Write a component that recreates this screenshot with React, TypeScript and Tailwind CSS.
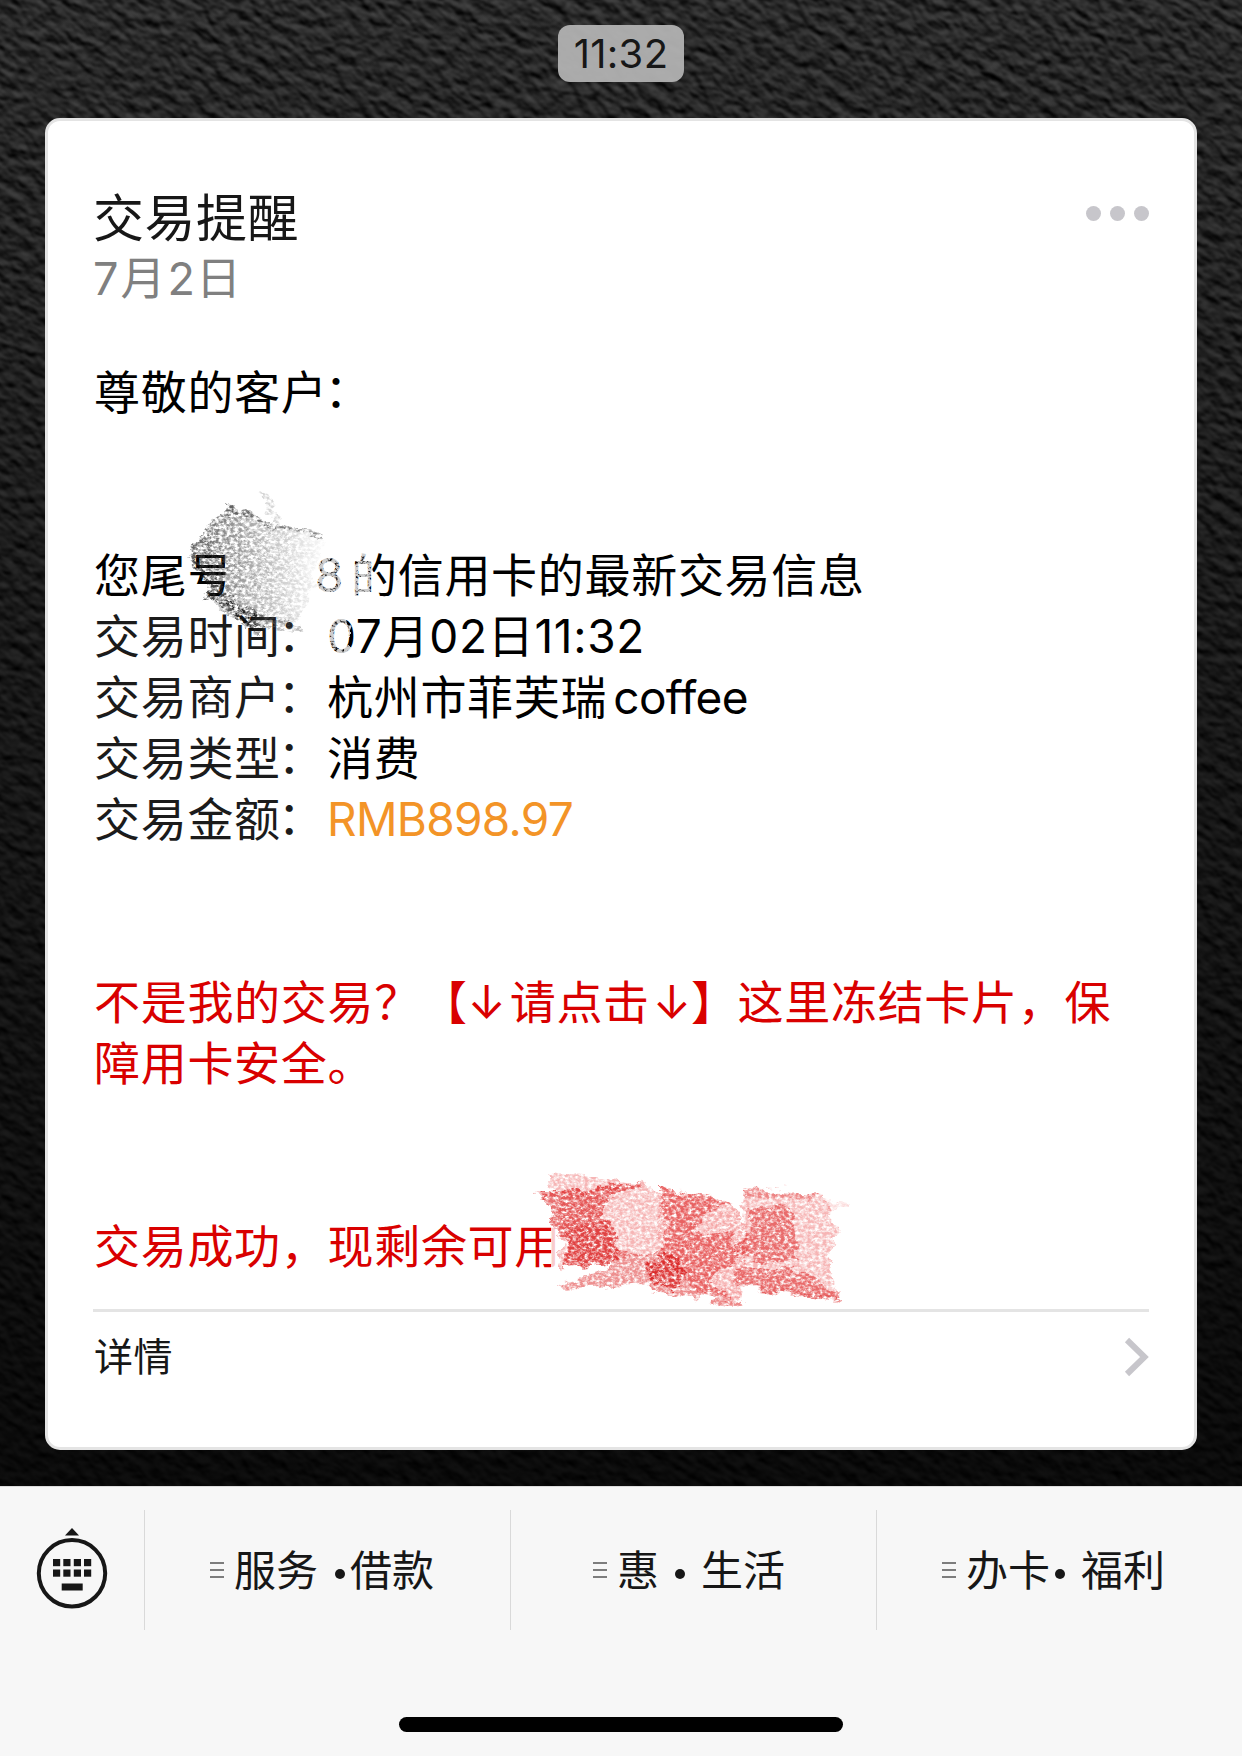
import type { ReactNode } from "react";

const Wallpaper = () => (
  <svg className="absolute inset-0 h-full w-full" viewBox="0 0 1242 1486" preserveAspectRatio="none">
    <defs>
      <filter id="leather" x="0" y="0" width="100%" height="100%" colorInterpolationFilters="sRGB">
        <feTurbulence type="fractalNoise" baseFrequency="0.07 0.11" numOctaves="3" seed="23" result="noise" />
        <feDiffuseLighting in="noise" surfaceScale="3" diffuseConstant="0.9" lightingColor="#ffffff">
          <feDistantLight azimuth="250" elevation="35" />
        </feDiffuseLighting>
        <feGaussianBlur stdDeviation="0.8" />
        <feColorMatrix values="0.36 0 0 0 -0.02  0.36 0 0 0 -0.02  0.36 0 0 0 -0.02  0 0 0 0 1" />
      </filter>
      <linearGradient id="shade" x1="0" y1="0" x2="0" y2="1">
        <stop offset="0" stopColor="#000" stopOpacity="0" />
        <stop offset="0.45" stopColor="#000" stopOpacity="0.42" />
        <stop offset="1" stopColor="#000" stopOpacity="0.76" />
      </linearGradient>
    </defs>
    <g transform="rotate(32 621 743)">
      <rect x="-420" y="-420" width="2080" height="2330" filter="url(#leather)" />
    </g>
    <rect width="1242" height="1486" fill="url(#shade)" />
  </svg>
);

// crayon filters: torn edges plus paper grain
const Grain = ({ id, slope, offset }: { id: string; slope: number; offset: number }) => (
  <filter id={id} x="-10%" y="-10%" width="120%" height="120%">
    <feTurbulence type="fractalNoise" baseFrequency="0.05 0.1" numOctaves="4" seed="4" result="warp" />
    <feDisplacementMap in="SourceGraphic" in2="warp" scale="16" xChannelSelector="R" yChannelSelector="G" result="torn" />
    <feTurbulence type="fractalNoise" baseFrequency="0.26 0.34" numOctaves="5" seed="31" />
    <feColorMatrix values={`0 0 0 0 0  0 0 0 0 0  0 0 0 0 0  ${slope} 0 0 0 ${offset}`} result="grain" />
    <feComposite in="torn" in2="grain" operator="in" />
    <feGaussianBlur stdDeviation="0.4" />
  </filter>
);

const GreyScribble = () => (
  <svg className="pointer-events-none absolute left-[97px] top-[349px]" width="280" height="200" viewBox="145 470 280 200">
    <defs>
      <Grain id="charcoal" slope={3} offset={-1} />
      <Grain id="eraser" slope={4} offset={-1} />
      <linearGradient id="charcoalFade" gradientUnits="userSpaceOnUse" x1="190" y1="0" x2="325" y2="0">
        <stop offset="0" stopColor="#333" stopOpacity="0.8" />
        <stop offset="0.4" stopColor="#555" stopOpacity="0.55" />
        <stop offset="0.75" stopColor="#777" stopOpacity="0.3" />
        <stop offset="1" stopColor="#999" stopOpacity="0.03" />
      </linearGradient>
    </defs>
    <path d="M225 545 L300 545 L318 610 L296 618 L262 612 L226 600 Z" fill="#fff" />
    <path d="M312 548 L372 548 L374 600 L344 612 L350 632 L350 665 L325 665 L296 625 Z" fill="#fff" opacity="0.8" filter="url(#eraser)" />
    <g filter="url(#charcoal)">
      <path d="M226 508 L325 538 L318 560 L306 610 L290 628 L252 626 L222 606 L203 602 L210 590 L188 556 L204 533 Z" fill="url(#charcoalFade)" />
      <path d="M259 490 L268 498 L285 526 L272 520 Z" fill="#999" opacity="0.4" />
      <path d="M224 506 L325 536 L325 540 L226 514 Z" fill="#444" opacity="0.6" />
      <path d="M192 558 L208 572 L234 598 L262 618 L262 636 L240 622 L204 600 L210 590 Z" fill="#111" opacity="0.45" />
      <path d="M222 592 L240 606 L258 622 L254 632 L238 620 Z" fill="#000" opacity="0.6" />
      <path d="M262 616 L304 624 L302 634 L270 630 Z" fill="#555" opacity="0.4" />
    </g>
  </svg>
);

const RedScribble = () => (
  <svg className="pointer-events-none absolute left-[472px] top-[1034px]" width="340" height="160" viewBox="520 1155 340 160">
    <defs>
      <Grain id="crayon" slope={2.6} offset={-0.6} />
      <Grain id="crayonLight" slope={2.4} offset={-0.6} />
    </defs>
    <rect x="551" y="1200" width="9" height="72" fill="#fff" opacity="0.8" />
    <path d="M562 1190 L840 1190 L840 1280 L562 1280 Z" fill="#fff" />
    <g filter="url(#crayonLight)" fill="#ee6c6c">
      <path d="M547 1174 L642 1182 L660 1195 L664 1250 L620 1256 L560 1272 L560 1194 L547 1186 Z" opacity="0.5" />
      <path d="M660 1186 L736 1206 L748 1235 L740 1300 L700 1295 L660 1255 Z" opacity="0.6" />
      <path d="M745 1188 L822 1195 L830 1206 L828 1222 L840 1228 L828 1250 L840 1300 L740 1282 Z" opacity="0.5" />
      <path d="M826 1200 L846 1204 L846 1208 L826 1208 Z" opacity="0.25" />
    </g>
    <g filter="url(#crayon)" fill="#dc2525">
      <path d="M538 1194 L640 1182 L642 1186 L606 1198 L602 1220 L612 1224 L618 1246 L620 1262 L564 1270 L566 1240 L548 1222 L552 1208 Z" opacity="0.65" />
      <path d="M568 1228 L606 1222 L620 1262 L566 1266 Z" opacity="0.45" />
      <path d="M556 1286 L606 1270 L616 1250 L650 1252 L660 1280 L590 1288 Z" opacity="0.5" />
      <path d="M660 1186 L736 1204 L708 1210 L700 1222 L694 1232 L736 1236 L738 1258 L710 1280 L744 1306 L650 1290 L645 1262 L668 1240 Z" opacity="0.52" />
      <path d="M646 1262 L676 1252 L684 1272 L678 1288 L652 1284 Z" fill="#d40d0d" opacity="0.6" />
      <path d="M748 1208 L790 1206 L798 1260 L760 1262 L734 1250 L750 1232 Z" opacity="0.5" />
      <path d="M738 1264 L800 1272 L840 1292 L838 1302 L736 1284 Z" opacity="0.5" />
      <path d="M744 1187 L820 1195 L800 1200 L746 1196 Z" opacity="0.35" />
      <path d="M736 1282 L838 1298 L838 1302 L736 1286 Z" opacity="0.4" />
      <path d="M540 1194 L620 1184 L620 1188 L540 1200 Z" opacity="0.4" />
    </g>
  </svg>
);

const Colon = () => <span className="relative -left-[3px] -top-[2px]">：</span>;

const Row = ({ label, children }: { label: string; children: ReactNode }) => (
  <div className="flex">
    <span className="w-[233px] shrink-0 text-[#1b1b1b]">
      {label}
      <Colon />
    </span>
    {children}
  </div>
);

const KeyboardIcon = () => (
  <svg width="72" height="84" viewBox="0 0 72 84" fill="#171717">
    <path d="M36 1 L43 8.5 H29 Z" />
    <circle cx="36" cy="46.3" r="33.2" fill="none" stroke="#171717" strokeWidth="4" />
    {[17, 27.3, 37.8, 48].map((x) => (
      <g key={x}>
        <rect x={x} y="32" width="7.2" height="7.2" />
        <rect x={x} y="42.5" width="7.2" height="7.2" />
      </g>
    ))}
    <rect x="25.7" y="56.5" width="21" height="7" />
  </svg>
);

const MenuLines = () => (
  <span className="flex w-[14px] shrink-0 flex-col gap-[5px]">
    <span className="h-[2px] bg-[#7d7d7d]" />
    <span className="h-[2px] bg-[#7d7d7d]" />
    <span className="h-[2px] bg-[#7d7d7d]" />
  </span>
);

const MenuItem = ({ left, right, pad, before, after }: { left: string; right: string; pad: string; before: string; after: string }) => (
  <div className={`flex h-[120px] w-[366px] items-center border-l border-[#d9d9d9] ${pad}`}>
    <MenuLines />
    <span className="ml-[10px] mt-[2px]">{left}</span>
    <span className={`mt-[7px] size-[10px] shrink-0 rounded-full bg-[#171717] ${before}`} />
    <span className={`mt-[2px] ${after}`}>{right}</span>
  </div>
);

const App = () => (
  <div className="flex h-[1756px] w-[1242px] flex-col overflow-hidden font-['Inter','Noto_Sans_CJK_SC',sans-serif] text-[#171717]">
    <main className="relative flex h-[1486px] flex-col items-center overflow-hidden bg-[#1a1a1a]">
      <Wallpaper />
      <div className="relative mt-[25px] flex h-[57px] w-[126px] items-center justify-center rounded-xl bg-[#b2b2b2]/95 pt-px text-[40px] leading-none tracking-[0.3px]">
        11:32
      </div>

      <section className="relative mt-[36px] flex h-[1332px] w-[1152px] flex-col rounded-[15px] border-[3px] border-[#e4e4e4] bg-white px-[45px]">
        <header className="flex h-[186px] justify-between pt-[63px]">
          <div>
            <h1 className="text-[51px] leading-[70px] tracking-[0.5px]">交易提醒</h1>
            <p className="text-[45px] leading-[49px] text-[#808080]">
              7<span className="mx-[2px]">月</span>2<span className="ml-px">日</span>
            </p>
          </div>
          <div className="mt-[22px] flex h-[15px] gap-[9px]">
            <span className="size-[15px] rounded-full bg-[#c7c6cb]" />
            <span className="size-[15px] rounded-full bg-[#c7c6cb]" />
            <span className="size-[15px] rounded-full bg-[#c7c6cb]" />
          </div>
        </header>

        <div className="mt-[55px] h-[947px] whitespace-nowrap pl-px text-[46px] leading-[61px] tracking-[0.7px] text-black">
          <p>
            尊敬的客户
            <Colon />
          </p>
          <div className="mt-[122px] flex">
            <span className="w-[221px]">您尾号</span>
            <span className="w-[36px]">8</span>
            <span>的信用卡的最新交易信息</span>
          </div>
          <Row label="交易时间">07月02日11:32</Row>
          <Row label="交易商户">
            杭州市菲芙瑞<span className="ml-[6px] tracking-[-0.6px]">coffee</span>
          </Row>
          <Row label="交易类型">消费</Row>
          <Row label="交易金额">
            <span className="tracking-[-0.7px] text-[#f39427]">RMB898.97</span>
          </Row>
          <div className="mt-[122px] text-[#d90000]">
            <p>
              不是我的交易？【<span className="mr-[3px]">↓</span>请点击<span className="ml-[3px] mr-[-1px]">↓</span>】这里冻结卡片，保
            </p>
            <p>障用卡安全。</p>
            <p className="mt-[122px]">交易成功，现剩余可用</p>
          </div>
        </div>

        <footer className="flex h-[116px] items-start justify-between border-t-[3px] border-[#e4e4e4] pt-[16px] text-[39px] leading-[58px]">
          <span className="pl-px tracking-[0.5px]">详情</span>
          <svg className="mt-[9px]" width="26" height="40" viewBox="0 0 26 40" fill="none" stroke="#c7c6cb" strokeWidth="6">
            <path d="M4 3 L21.5 20 L4 37" />
          </svg>
        </footer>
        <GreyScribble />
        <RedScribble />
      </section>
    </main>

    <nav className="flex h-[270px] flex-col items-center border-t border-[#dcdcdc] bg-[#f7f7f7]">
      <div className="mt-[23px] flex h-[120px] w-full text-[42px] leading-none">
        <div className="flex w-[144px] items-start justify-center pt-[17px]">
          <KeyboardIcon />
        </div>
        <MenuItem left="服务" right="借款" pad="pl-[65px]" before="ml-[17px]" after="ml-[5px]" />
        <MenuItem left="惠" right="生活" pad="pl-[82px]" before="ml-[16px]" after="ml-[16px]" />
        <MenuItem left="办卡" right="福利" pad="pl-[65px]" before="ml-[5px]" after="ml-[16px]" />
      </div>
      <div className="mt-[87px] h-[15px] w-[444px] rounded-full bg-black" />
    </nav>
  </div>
);

export default App;
